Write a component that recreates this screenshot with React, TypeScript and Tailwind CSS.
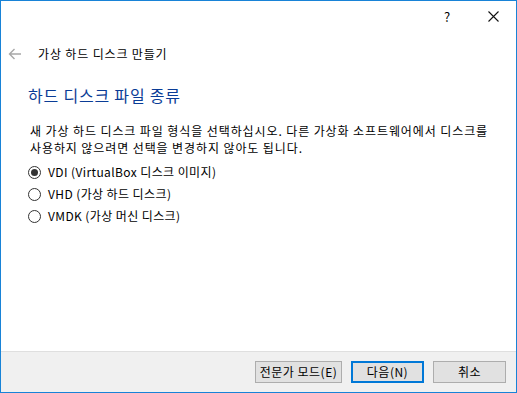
import { useState } from "react";

const FONT = { fontFamily: '"Noto Sans CJK KR", "Noto Sans", sans-serif' };

const options = [
  { id: "vdi", label: "VDI (VirtualBox 디스크 이미지)" },
  { id: "vhd", label: "VHD (가상 하드 디스크)" },
  { id: "vmdk", label: "VMDK (가상 머신 디스크)" },
];

function Radio({ checked }: { checked: boolean }) {
  return (
    <span className="w-[13px] h-[13px] rounded-full border border-[#333] bg-white flex items-center justify-center shrink-0">
      {checked && <span className="w-[7px] h-[7px] rounded-full bg-[#333]" />}
    </span>
  );
}

export default function App() {
  const [format, setFormat] = useState("vdi");

  return (
    <div
      className="w-[517px] h-[393px] border border-[#1883d7] bg-white flex flex-col text-[12px] text-black overflow-hidden"
      style={FONT}
    >
      {/* Title bar */}
      <div className="h-[30px] flex items-center justify-end shrink-0">
        <span className="w-[46px] text-center text-[13px] leading-none">?</span>
        <span className="w-[46px] flex items-center justify-center">
          <svg width="11" height="11" viewBox="0 0 11 11" stroke="#111" strokeWidth="1.1">
            <path d="M0.5 0.5 L10.5 10.5 M10.5 0.5 L0.5 10.5" />
          </svg>
        </span>
      </div>

      {/* Header */}
      <div className="h-[44px] flex items-center pl-[7px] shrink-0 mt-[1px]">
        <svg width="14" height="12" viewBox="0 0 14 12" fill="none" stroke="#a8a8a8" strokeWidth="1.4">
          <path d="M13 6 H1.5 M6.5 1 L1.5 6 L6.5 11" />
        </svg>
        <span className="ml-[16px] tracking-[0.85px]">가상 하드 디스크 만들기</span>
      </div>

      {/* Content */}
      <div className="flex-1 pl-[27px] pr-[10px]">
        <h1 className="text-[16px] text-[#0a3c96] mt-[7px] leading-[24px] tracking-[0.8px]">
          하드 디스크 파일 종류
        </h1>
        <p className="mt-[15px] pl-[2px] leading-[17px] tracking-[0.9px] whitespace-nowrap">
          새 가상 하드 디스크 파일 형식을 선택하십시오. 다른 가상화 소프트웨어에서 디스크를
          <br />
          사용하지 않으려면 선택을 변경하지 않아도 됩니다.
        </p>
        <div className="mt-[8px] flex flex-col gap-[6px]">
          {options.map((o) => (
            <label
              key={o.id}
              className="flex items-center gap-[7px] h-[16px] cursor-default tracking-[0.4px]"
              onClick={() => setFormat(o.id)}
            >
              <Radio checked={format === o.id} />
              <span>{o.label}</span>
            </label>
          ))}
        </div>
      </div>

      {/* Footer */}
      <div className="h-[41px] bg-[#f0f0f0] border-t border-[#dfdfdf] flex items-center justify-end gap-[9px] pr-[10px] shrink-0">
        <button className="w-[87px] h-[22px] bg-[#e1e1e1] border border-[#adadad] text-[12px] leading-none tracking-[0.5px]">
          전문가 모드(E)
        </button>
        <button className="w-[73px] h-[22px] bg-[#e1e1e1] border-2 border-[#0078d7] text-[12px] leading-none tracking-[0.5px]">
          다음(N)
        </button>
        <button className="w-[73px] h-[22px] bg-[#e1e1e1] border border-[#adadad] text-[12px] leading-none tracking-[0.5px]">
          취소
        </button>
      </div>
    </div>
  );
}
